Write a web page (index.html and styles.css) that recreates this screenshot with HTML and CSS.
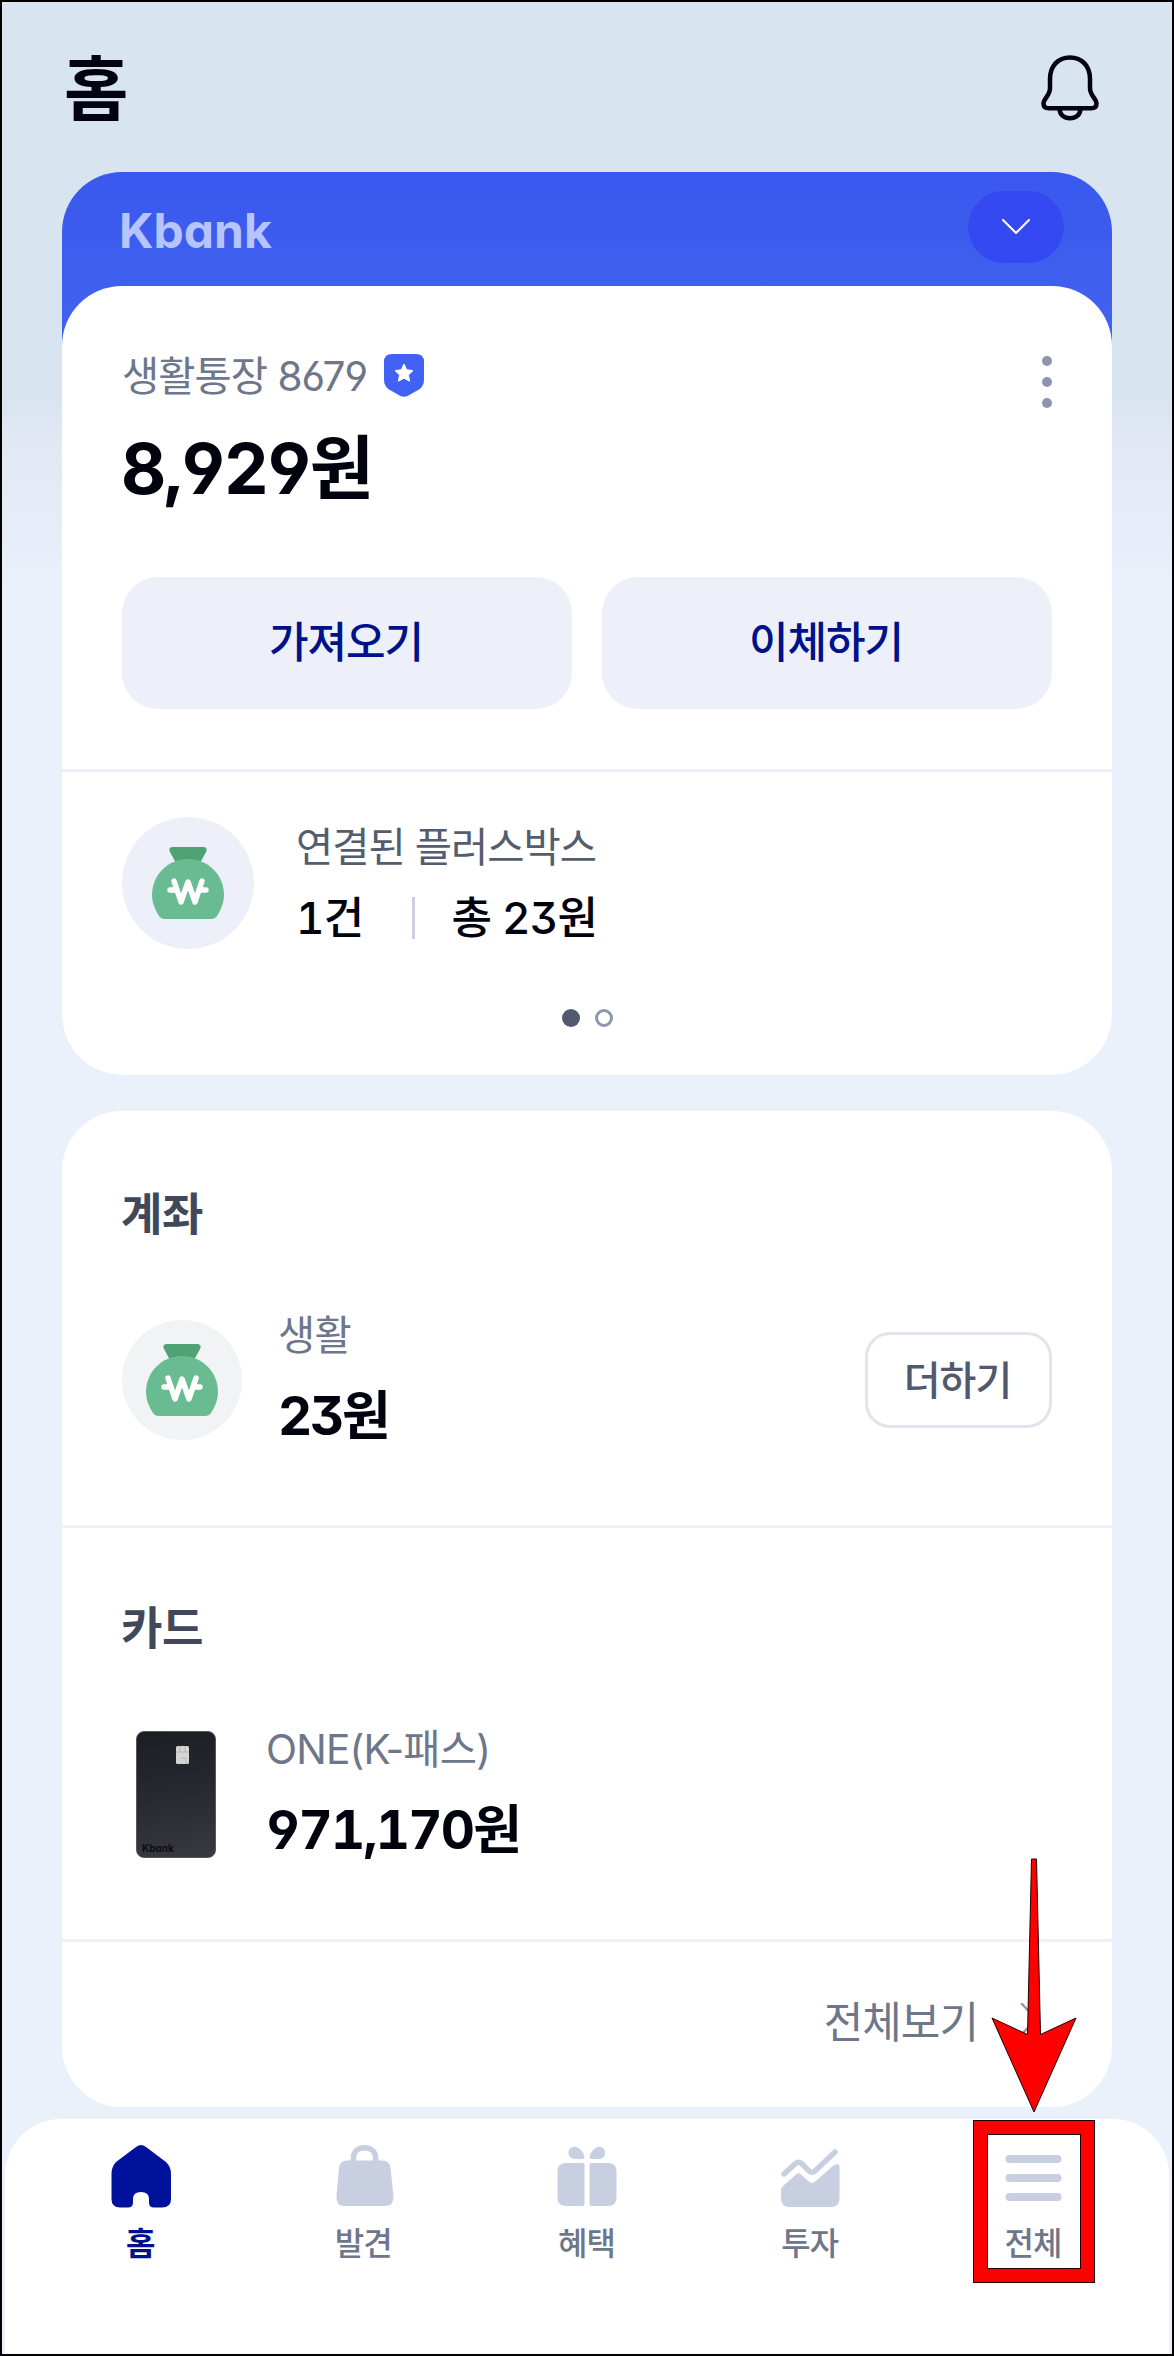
FILE: index.html
```html
<!DOCTYPE html>
<html lang="ko">

<head>
    <meta charset="UTF-8" />
    <meta name="viewport" content="width=device-width, initial-scale=1.0" />
    <title>홈</title>
    <link rel="stylesheet" href="styles.css">
</head>

<body>
    <div class="app">
        <header class="header">
            <h1>홈</h1>
            <svg class="bell" width="58" height="66" viewBox="0 0 58 66" fill="none" stroke="#02030f" stroke-width="4.5" stroke-linejoin="round">
                <path d="M29 2.5C17 2.5 9 11 9 24V33C9 41 2.5 43.500 2.500 48.500C2.500 52 5 53.300 8 53.300H50C53 53.300 55.500 52 55.500 48.500C55.500 43.500 49 41 49 33V24C49 11 41 2.500 29 2.500Z" />
                <path d="M18.500 54C19 60 23 63.300 29 63.300C35 63.300 39 60 39.500 54" />
            </svg>
        </header>

        <!-- Main account -->
        <section class="hero">
            <div class="hero-top">
                <span class="logo">Kbank</span>
                <button class="toggle">
                    <svg width="28" height="15" viewBox="0 0 28 15" fill="none" stroke="#fff" stroke-width="2" stroke-linecap="round" stroke-linejoin="round">
                        <path d="M1 1L14 14L27 1" />
                    </svg>
                </button>
            </div>
            <div class="hero-body">
                <div class="account">
                    <div class="account-name">
                        <span>생활통장 8679</span>
                        <svg width="40" height="43" viewBox="0 0 40 43">
                            <path d="M8 0H32Q40 0 40 8V26Q40 32 35 35.500L23.500 42Q20 43.500 16.500 42L5 35.500Q0 32 0 26V8Q0 0 8 0Z" fill="#4262f7" />
                            <path d="M20 10L22.700 15.800L29 16.600L24.400 20.900L25.600 27.200L20 24.200L14.400 27.200L15.600 20.900L11 16.600L17.300 15.800Z" fill="#fff" stroke="#fff" stroke-linejoin="round" />
                        </svg>
                        <div class="more"><i></i><i></i><i></i></div>
                    </div>
                    <div class="balance">8,929원</div>
                    <div class="actions">
                        <button>가져오기</button>
                        <button>이체하기</button>
                    </div>
                </div>
                <div class="plusbox">
                    <div class="circle circle-lg">
                        <svg width="72" height="72" viewBox="0 0 72 72">
                            <path d="M20 0H52Q56 1 54 5L48 16H24L18 5Q16 1 20 0Z" fill="#4fa274" />
                            <path d="M36 12C16 12 0 28 0 48C0 57 4 64 7 69Q9 72 13 72H59Q63 72 65 69C68 64 72 57 72 48C72 28 56 12 36 12Z" fill="#69bc91" />
                            <path d="M22 34L29 55L36 35L43 55L50 34M18 43H25M47 43H54" fill="none" stroke="#fff" stroke-width="5.500" stroke-linecap="round" stroke-linejoin="round" />
                        </svg>
                    </div>
                    <div class="plusbox-text">
                        <div class="plusbox-title">연결된 플러스박스</div>
                        <div class="plusbox-info">
                            <span class="count">1건</span>
                            <span class="bar"></span>
                            <span class="sum">총 23원</span>
                        </div>
                    </div>
                </div>
                <div class="pager">
                    <span class="dot active"></span>
                    <span class="dot"></span>
                </div>
            </div>
        </section>

        <!-- Accounts and cards -->
        <section class="list">
            <div class="group">
                <h2>계좌</h2>
                <div class="row">
                    <div class="circle">
                        <svg width="72" height="72" viewBox="0 0 72 72">
                            <path d="M20 0H52Q56 1 54 5L48 16H24L18 5Q16 1 20 0Z" fill="#4fa274" />
                            <path d="M36 12C16 12 0 28 0 48C0 57 4 64 7 69Q9 72 13 72H59Q63 72 65 69C68 64 72 57 72 48C72 28 56 12 36 12Z" fill="#69bc91" />
                            <path d="M22 34L29 55L36 35L43 55L50 34M18 43H25M47 43H54" fill="none" stroke="#fff" stroke-width="5.500" stroke-linecap="round" stroke-linejoin="round" />
                        </svg>
                    </div>
                    <div class="row-text">
                        <div class="row-name">생활</div>
                        <div class="row-amount">23원</div>
                    </div>
                    <button class="add">더하기</button>
                </div>
            </div>
            <div class="group">
                <h2>카드</h2>
                <div class="row row-card">
                    <div class="card-art">
                        <svg class="chip" width="13" height="18" viewBox="0 0 13 18">
                            <rect width="13" height="18" rx="1.500" fill="#d4d4d4" />
                            <path d="M0 6H13M4 6V0M9 6V0M5 12H10V18" fill="none" stroke="#aaa" stroke-width="0.700" />
                        </svg>
                        <span class="card-logo">Kbank</span>
                    </div>
                    <div class="row-text">
                        <div class="row-name">ONE(K-패스)</div>
                        <div class="row-amount amount-card">971,170원</div>
                    </div>
                </div>
            </div>
            <a class="view-all">
                <span>전체보기</span>
                <svg width="18" height="34" viewBox="0 0 18 34" fill="none" stroke="#8e96ad" stroke-width="2.500" stroke-linecap="round" stroke-linejoin="round">
                    <path d="M2 2L16 17L2 32" />
                </svg>
            </a>
        </section>

        <nav class="tabs">
            <a class="tab active">
                <svg width="72" height="72" viewBox="0 0 72 72" fill="#00119c">
                    <path d="M31 7Q36 3 41 7L61 22Q66 27 66 34V59Q66 67.500 57 67.500H49Q44 67.500 44 62.500V59Q44 52 36 52Q28 52 28 59V62.500Q28 67.500 23 67.500H15Q6.500 67.500 6.500 59V34Q6.500 27 11 22Z" />
                </svg>
                <span>홈</span>
            </a>
            <a class="tab">
                <svg width="72" height="72" viewBox="0 0 72 72" fill="#c8cfe0">
                    <path d="M25.300 22V18.500C25.300 11 30.500 7.700 36.500 7.700C42.500 7.700 47.700 11 47.700 18.500V22" fill="none" stroke="#c8cfe0" stroke-width="5.500" />
                    <path d="M19 20.500H54.500Q61.500 20.500 62.500 28L65.500 56Q66 66 57 66H17Q7.500 66 8.500 56L11 28Q12 20.500 19 20.500Z" />
                </svg>
                <span>발견</span>
            </a>
            <a class="tab">
                <svg width="72" height="72" viewBox="0 0 72 72" fill="#c8cfe0">
                    <path d="M15 23H31.500Q33.500 23 33.500 25V64Q33.500 66 31.500 66H15Q6.500 66 6.500 57.500V31.500Q6.500 23 15 23Z" />
                    <path d="M40.500 23H57Q65.500 23 65.500 31.500V57.500Q65.500 66 57 66H40.500Q38.500 66 38.500 64V25Q38.500 23 40.500 23Z" />
                    <path d="M23 19C19 18 17.500 15.500 17.500 12.700C17.500 9 20.300 6.700 23.500 6.700C29 6.700 33.500 14 33.500 17Q33.500 19 31.500 19Z" />
                    <path d="M49 19C53 18 54 15.500 54 12.700C54 9 51.500 6.700 48.500 6.700C43 6.700 38.500 14 38.500 17Q38.500 19 40.500 19Z" />
                </svg>
                <span>혜택</span>
            </a>
            <a class="tab">
                <svg width="72" height="72" viewBox="0 0 72 72" fill="#c8cfe0">
                    <path d="M10 34L21.500 23.500Q24.500 21 27.500 23.500L35 31Q38 33.500 41 31L61 12" fill="none" stroke="#c8cfe0" stroke-width="5.500" stroke-linecap="round" />
                    <path d="M9 46L22 34.500Q24.500 32 27 34.500L35.500 42Q38 44 40.500 42L59.500 25.500Q65.500 21.500 65.500 28V58.500Q65.500 67 57 67H15.500Q7 67 7 58.500V50Q7 48 9 46Z" />
                </svg>
                <span>투자</span>
            </a>
            <a class="tab">
                <svg width="72" height="72" viewBox="0 0 72 72" stroke="#c8cfe0" stroke-width="8" stroke-linecap="round">
                    <path d="M12.500 19H60.500M12.500 38H60.500M12.500 57H60.500" />
                </svg>
                <span>전체</span>
            </a>
        </nav>

        <!-- Guide marks over the page -->
        <div class="mark-box"></div>
        <svg class="mark-arrow" width="88" height="258" viewBox="0 0 88 258">
            <path d="M41.500 2H46.500L50.500 177.500L86 161L44 255L2 161L37.500 177.500Z" fill="#fe0000" stroke="#200" />
        </svg>
    </div>
</body>

</html>
```
FILE: styles.css
```css
* {
    margin: 0;
    padding: 0;
    box-sizing: border-box;
}

body {
    font-family: Inter, "Noto Sans CJK KR", sans-serif;
    font-feature-settings: "ss01", "tnum";
    color: #02030f;
}

button {
    border: none;
    font-family: inherit;
    font-feature-settings: inherit;
}

.app {
    position: relative;
    width: 1174px;
    height: 2356px;
    border: 2px solid #000;
    overflow: hidden;
    background: linear-gradient(#d8e4f0 0, #d8e4f0 390px, #e1e8f4 440px, #eaf1fb 590px);
}

.header {
    display: flex;
    justify-content: space-between;
    align-items: center;
    height: 170px;
    padding: 2px 73px 0 62px;
}

h1 {
    padding-top: 4px;
    font-size: 70px;
    font-weight: 700;
    line-height: 80px;
}

.hero,
.list {
    width: 1050px;
    margin: 0 auto;
    border-radius: 60px;
}

.hero {
    background: linear-gradient(#3a58ee, #4264ee 180px, #b9cfe6 300px);
}

.hero-top {
    display: flex;
    justify-content: space-between;
    align-items: center;
    height: 114px;
    padding: 0 48px 5px 57px;
}

.logo {
    padding-top: 8px;
    font-size: 48px;
    font-weight: 700;
    line-height: 60px;
    font-feature-settings: "cv11";
    color: #b6c4ff;
}

.toggle {
    display: flex;
    justify-content: center;
    align-items: center;
    width: 96px;
    height: 72px;
    border-radius: 36px;
    background: #3549f2;
}

.hero-body {
    height: 789px;
    border-radius: 60px;
    background: #fff;
}

.account {
    height: 486px;
    padding: 59px 60px 0;
    border-bottom: 3px solid #eef0f7;
}

.account-name {
    display: flex;
    align-items: center;
    gap: 17px;
    height: 60px;
    font-size: 40.5px;
    letter-spacing: -1px;
    font-feature-settings: "ss01";
    color: #6d768a;
}

.account-name span {
    padding-bottom: 4px;
}

.more {
    display: flex;
    flex-direction: column;
    gap: 10.5px;
    margin-left: auto;
    padding-top: 14px;
}

.more i {
    width: 10.5px;
    height: 10.5px;
    border-radius: 50%;
    background: #8e94b0;
}

.balance {
    margin: 24px 0 68px -1px;
    font-size: 70px;
    font-weight: 700;
    line-height: 80px;
    letter-spacing: -2.2px;
}

.actions {
    display: flex;
    gap: 30px;
}

.actions button {
    flex: 1;
    height: 132px;
    padding: 0 2px 9px 0;
    border-radius: 36px;
    background: #edf0f8;
    font-size: 43px;
    font-weight: 500;
    letter-spacing: -1px;
    color: #00118c;
}

.plusbox {
    display: flex;
    align-items: center;
    gap: 42px;
    padding: 45px 60px 60px;
}

.circle {
    display: flex;
    justify-content: center;
    align-items: center;
    flex-shrink: 0;
    width: 120px;
    height: 120px;
    border-radius: 50%;
    background: #f1f3f5;
}

.circle-lg {
    width: 132px;
    height: 132px;
    background: #edf0f8;
}

.plusbox-text {
    display: flex;
    flex-direction: column;
    gap: 10px;
    line-height: 60px;
}

.plusbox-title {
    font-size: 40.5px;
    letter-spacing: -1px;
    color: #545d6e;
}

.plusbox-info {
    display: flex;
    align-items: center;
    font-size: 44px;
    font-weight: 500;
    letter-spacing: -0.8px;
}

.bar {
    width: 3px;
    height: 42px;
    margin: 0 36px 0 49px;
    background: #ccd0e0;
}

.pager {
    display: flex;
    justify-content: center;
    gap: 15px;
}

.dot {
    width: 18px;
    height: 18px;
    border: 3px solid #8e96ad;
    border-radius: 50%;
}

.dot.active {
    border: none;
    background: #51596c;
}

.list {
    height: 996px;
    margin-top: 36px;
    background: #fff;
}

.group {
    height: 417px;
    padding: 74px 60px 0;
    border-bottom: 3px solid #eff1f5;
}

.group + .group {
    height: 414px;
    padding-top: 71px;
}

h2 {
    margin-left: -1px;
    font-size: 45px;
    font-weight: 700;
    line-height: 60px;
    letter-spacing: -0.5px;
    color: #40485a;
}

.row {
    display: flex;
    align-items: center;
    gap: 36px;
    height: 148px;
    margin-top: 61px;
}

.row-card {
    gap: 50px;
    padding-left: 14px;
}

.row-text {
    display: flex;
    flex-direction: column;
    gap: 20px;
    align-self: flex-start;
    line-height: 60px;
}

.row-name {
    font-size: 40.5px;
    letter-spacing: -0.8px;
    font-feature-settings: "ss01";
    color: #6d768a;
}

.row-amount {
    font-size: 53px;
    font-weight: 700;
    letter-spacing: -2.3px;
}

.amount-card {
    letter-spacing: -1.8px;
}

.add {
    width: 187px;
    height: 96px;
    margin-left: auto;
    padding: 0 2px 5px 0;
    border: 3px solid #e1e4ec;
    border-radius: 25px;
    background: #fff;
    font-size: 40px;
    font-weight: 500;
    letter-spacing: -1px;
    color: #51596c;
}

.card-art {
    display: flex;
    flex-direction: column;
    justify-content: space-between;
    width: 80px;
    height: 127px;
    padding: 14px 5px 4px;
    border: 1px solid #55575b;
    border-radius: 8px;
    background: linear-gradient(170deg, #1b1f23, #24272d 40%, #393941);
}

.chip {
    margin-left: 34px;
}

.card-logo {
    font-size: 10px;
    font-weight: 700;
    line-height: 10px;
    font-feature-settings: "cv11";
    color: #0c0d10;
}

.view-all {
    display: flex;
    justify-content: flex-end;
    align-items: center;
    gap: 42px;
    height: 165px;
    padding: 0 74px 11px 0;
    font-size: 43px;
    letter-spacing: -1px;
    color: #6d768a;
}

.tabs {
    display: flex;
    height: 237px;
    margin: 12px 3px 0;
    padding: 21px 24px 0;
    border-radius: 56px 56px 0 0;
    background: #fff;
}

.tab {
    display: flex;
    flex: 1;
    flex-direction: column;
    align-items: center;
    gap: 12px;
    font-size: 32px;
    font-weight: 500;
    line-height: 40px;
    letter-spacing: -1px;
    color: #6d768a;
}

.tab span {
    padding-right: 1px;
}

.tab.active {
    font-weight: 700;
    color: #00118c;
}

.mark-box {
    position: absolute;
    left: 971px;
    top: 2118px;
    width: 122px;
    height: 163px;
    border: 14px solid #fe0000;
    outline: 1px solid #200;
    outline-offset: -1px;
    box-shadow: inset 0 0 0 1px #200;
}

.mark-arrow {
    position: absolute;
    left: 988px;
    top: 1855px;
}
```
